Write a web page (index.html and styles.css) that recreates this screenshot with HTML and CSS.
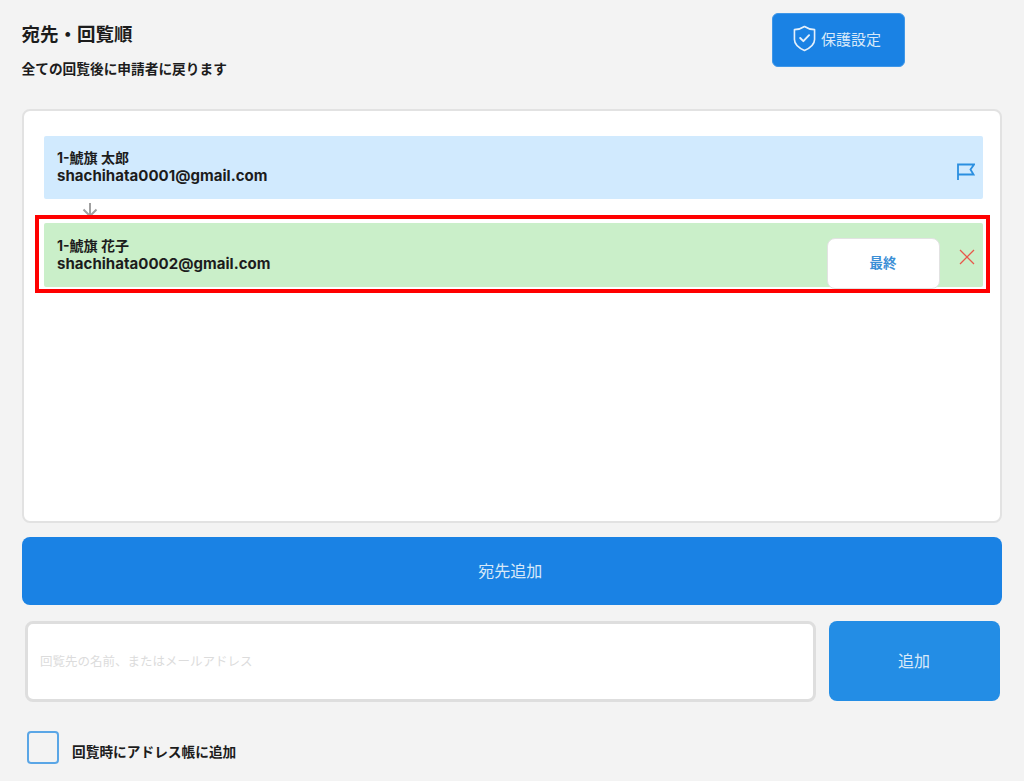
FILE: index.html
```html
<!DOCTYPE html>
<html lang="ja">
<head>
<meta charset="utf-8">
<title>宛先・回覧順</title>
<link rel="stylesheet" href="styles.css">
</head>
<body>
<main class="page">
  <header class="header">
    <div class="heading">
      <h1 class="title">宛先・回覧順</h1>
      <p class="subtitle">全ての回覧後に申請者に戻ります</p>
    </div>
    <button class="protect" type="button">
      <svg class="shield" viewBox="0 0 24 28" width="23" height="27" fill="none" stroke="#e4f0fb" stroke-width="1.7" stroke-linejoin="round" stroke-linecap="round">
        <path d="M12 1.500 C15 3.600 18.600 4.600 22.500 4.800 V15 C22.500 20.500 17.500 24 12 26.500 C6.500 24 1.500 20.500 1.500 15 V4.800 C5.400 4.600 9 3.600 12 1.500 Z"/>
        <path d="M7.500 13.500 L10.800 16.800 L16.800 10.500" stroke-width="2"/>
      </svg>
      <span class="protect-label">保護設定</span>
    </button>
  </header>

  <section class="list">
    <div class="row row-blue">
      <div class="who">
        <div class="name">1-鯱旗 太郎</div>
        <div class="mail">shachihata0001@gmail.com</div>
      </div>
      <svg class="flag" viewBox="0 0 18 17" width="18" height="17" fill="none" stroke="#2b8fe0" stroke-width="1.800">
        <path d="M1 17 V1.500 H17 L13.500 6.500 L16.500 11.500 H1"/>
      </svg>
    </div>
    <svg class="arrow" viewBox="0 0 16 14" width="16" height="14" fill="none" stroke="#a0a0a0" stroke-width="2">
      <path d="M8 0 V14 M1.500 6.500 L8 13 L14.500 6.500"/>
    </svg>
    <div class="row row-green">
      <div class="who">
        <div class="name">1-鯱旗 花子</div>
        <div class="mail">shachihata0002@gmail.com</div>
      </div>
      <button class="final" type="button">最終</button>
      <svg class="close" viewBox="0 0 16 16" width="16" height="16" fill="none" stroke="#e8574a" stroke-width="1.300">
        <path d="M1 1 L15 15 M15 1 L1 15"/>
      </svg>
      <div class="highlight"></div>
    </div>
  </section>

  <button class="add-dest" type="button">宛先追加</button>

  <div class="add-row">
    <div class="input">回覧先の名前、またはメールアドレス</div>
    <button class="add" type="button">追加</button>
  </div>

  <label class="check">
    <span class="box"></span>
    <span class="check-label">回覧時にアドレス帳に追加</span>
  </label>
</main>
</body>
</html>
```
FILE: styles.css
```css
* { box-sizing: border-box; }
html, body { margin: 0; height: 781px; overflow: hidden; }
body {
  background: #f3f3f3;
  color: #1c1c1c;
  font-family: Inter, "Noto Sans CJK JP", sans-serif;
}
.page { padding: 0 22px 0 21.500px; }
.header {
  display: flex;
  justify-content: space-between;
  align-items: flex-start;
  height: 109px;
  padding-top: 13px;
  padding-right: 97px;
}
.heading { padding-top: 9px; }
.title { margin: 0; font-size: 18.500px; line-height: 24px; font-weight: 700; }
.subtitle { margin: 14px 0 0; font-size: 13.700px; line-height: 18px; font-weight: 700; }
button { font-family: inherit; border: 0; cursor: pointer; }
.protect {
  width: 133px;
  height: 54px;
  display: flex;
  align-items: center;
  justify-content: center;
  gap: 5px;
  background: #1a82e4;
  border: 1px solid #3f97e8;
  border-radius: 6px;
  color: #d8e9f9;
  font-size: 15px;
  padding: 0 3px 3px 0;
}
.shield { flex: none; }
.list {
  height: 414px;
  background: #fff;
  border: 2px solid #e2e2e2;
  border-radius: 8px;
  padding: 25px 17px 0 20.500px;
}
.row {
  position: relative;
  height: 64px;
  display: flex;
  align-items: center;
  border-radius: 2px;
  padding-left: 13px;
}
.row-blue { background: #d1eafe; height: 63px; }
.row-green { background: #caefc9; }
.who { flex: 1; font-weight: 700; color: #1c1c1c; padding-bottom: 1px; }
.name { font-size: 14px; line-height: 18px; }
.mail { font-size: 15px; line-height: 18px; letter-spacing: 0.030px; }
.flag { position: absolute; right: 8px; top: 27px; }
.arrow { display: block; margin: 4px 0 6px 38px; }
.final {
  position: absolute;
  left: 782.500px;
  top: 14.500px;
  width: 113px;
  height: 51px;
  background: #fff;
  border: 1px solid #e2e2e2;
  border-radius: 8px;
  color: #3b8fd6;
  font-size: 13.500px;
  font-weight: 700;
  padding: 0 0 3px;
}
.close { position: absolute; right: 8px; top: 26px; }
.highlight {
  position: absolute;
  left: -9px;
  right: -7px;
  top: -8px;
  bottom: -6px;
  border: 4px solid #ff0000;
  pointer-events: none;
}
.add-dest {
  display: block;
  width: 100%;
  height: 68px;
  margin-top: 14px;
  background: #1a82e4;
  border-radius: 8px;
  color: #d8e9f9;
  font-size: 16px;
  padding: 0 3px 2px 0;
}
.add-row {
  display: flex;
  gap: 13px;
  margin: 16px 2px 0 3px;
}
.input {
  width: 791px;
  height: 81px;
  display: flex;
  align-items: center;
  background: #fff;
  border: 3px solid #dedede;
  border-radius: 8px;
  padding: 0 0 2px 12.500px;
  font-size: 12.500px;
  color: #dcdcdc;
}
.add {
  width: 171px;
  height: 80px;
  background: #238de5;
  border-radius: 8px;
  color: #d8e9f9;
  font-size: 16px;
  padding: 0 0 2px;
}
.check {
  display: flex;
  align-items: flex-end;
  gap: 13px;
  margin: 29px 0 0 5.500px;
}
.box {
  width: 32px;
  height: 33px;
  border: 2px solid #5aa6e6;
  border-radius: 4px;
}
.check-label { font-size: 13.700px; line-height: 18px; font-weight: 700; margin-bottom: 3px; }
```
